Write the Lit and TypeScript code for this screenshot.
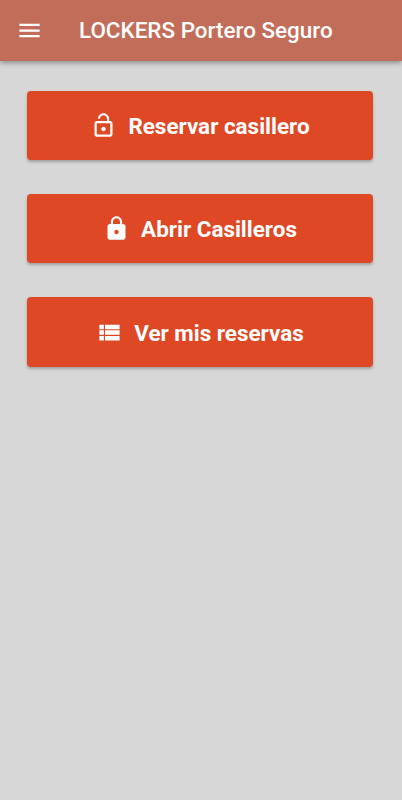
import { LitElement, html, css, svg } from "lit";

const icons: Record<string, any> = {
  menu: svg`<path d="M3 18h18v-2H3v2zm0-5h18v-2H3v2zm0-7v2h18V6H3z"/>`,
  open: svg`<path d="M12 17c1.1 0 2-.9 2-2s-.9-2-2-2-2 .9-2 2 .9 2 2 2zm6-9h-1V6c0-2.760-2.240-5-5-5S7 3.240 7 6h1.900c0-1.710 1.390-3.100 3.100-3.100s3.100 1.390 3.100 3.100v2H6c-1.100 0-2 .9-2 2v10c0 1.100.9 2 2 2h12c1.100 0 2-.9 2-2V10c0-1.100-.9-2-2-2zm0 12H6V10h12v10z"/>`,
  lock: svg`<path d="M18 8h-1V6c0-2.760-2.240-5-5-5S7 3.240 7 6v2H6c-1.100 0-2 .9-2 2v10c0 1.100.9 2 2 2h12c1.100 0 2-.9 2-2V10c0-1.100-.9-2-2-2zm-6 9c-1.100 0-2-.9-2-2s.9-2 2-2 2 .9 2 2-.9 2-2 2zm3.100-9H8.900V6c0-1.710 1.390-3.100 3.100-3.100s3.100 1.390 3.100 3.100v2z"/>`,
  list: svg`<path d="M3 9h4V5H3v4zm0 5h4v-4H3v4zm5 0h13v-4H8v4zm0-5h13V5H8v4zM3 19h4v-4H3v4zm5 0h13v-4H8v4z"/>`,
};

class AppRoot extends LitElement {
  static styles = css`
    :host { display: block; height: 800px; overflow: hidden; background: #d7d7d7; font-family: Roboto, sans-serif; color: #fff; }
    header { box-sizing: border-box; height: 61px; background: #c26d5a; display: flex; align-items: center; padding-left: 16px; box-shadow: 0 2px 5px rgba(0,0,0,.35); }
    svg { fill: currentColor; flex: none; display: block; }
    h1 { margin: 0 0 1px 36px; font-size: 22.450px; font-weight: 500; white-space: nowrap; line-height: 28px; }
    main { display: flex; flex-direction: column; gap: 34px; padding: 29.600px 29.400px 0 27.400px; }
    button { box-sizing: border-box; height: 69.400px; border: 0; border-radius: 4px; padding: 1.400px 0 0; background: #de4825; color: #fff; font: 700 22.450px/28px Roboto, sans-serif; display: flex; align-items: center; justify-content: center; gap: 11px; white-space: nowrap; box-shadow: 0 2px 3px rgba(0,0,0,.25); }
    button svg { margin-bottom: 1px; }
  `;
  icon(name: string) {
    return html`<svg width="27" height="27" viewBox="0 0 24 24">${icons[name]}</svg>`;
  }
  render() {
    return html`
      <header>${this.icon("menu")}<h1>LOCKERS Portero Seguro</h1></header>
      <main>
        <button>${this.icon("open")}<span>Reservar casillero</span></button>
        <button>${this.icon("lock")}<span>Abrir Casilleros</span></button>
        <button>${this.icon("list")}<span>Ver mis reservas</span></button>
      </main>`;
  }
}
customElements.define("app-root", AppRoot);
